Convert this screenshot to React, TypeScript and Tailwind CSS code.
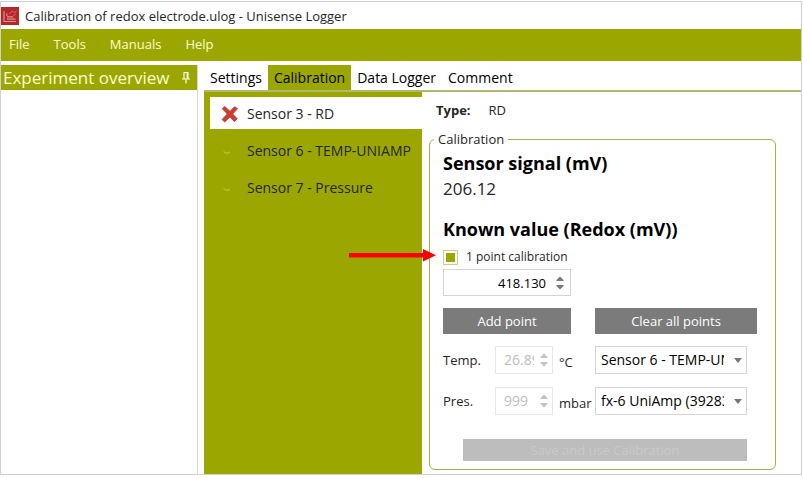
import { useState } from 'react';

const sensors = [
  { id: 3, name: 'Sensor 3 - RD', calibrated: false },
  { id: 6, name: 'Sensor 6 - TEMP-UNIAMP', calibrated: true },
  { id: 7, name: 'Sensor 7 - Pressure', calibrated: true },
];

const menus = ['File', 'Tools', 'Manuals', 'Help'];
const tabs = ['Settings', 'Calibration', 'Data Logger', 'Comment'];

function AppIcon() {
  return (
    <svg viewBox="0 0 18 18" className="size-[18px] shrink-0" aria-hidden="true">
      <rect width="18" height="18" fill="#b3282b" />
      <path d="M3 4v10.500h12M6 12.200h8.500M6 9.800h6M5.800 9V6.500" fill="none" stroke="#e58f88" strokeWidth="1.200" />
      <path d="M8.500 7l2.500-3 2.500 2 2-2.500M12 9l3-2" fill="none" stroke="#d9605f" strokeWidth="1" />
    </svg>
  );
}

function PinIcon() {
  return (
    <svg viewBox="0 0 10 14" className="h-3.5 w-2.5" fill="none" stroke="#fdfde0" aria-hidden="true">
      <path d="M2.500 1.500h5M3 1.500v6M7 1.500v6M1 8h8M5 8v4.500" strokeWidth="1.200" />
      <path d="M6.300 2v5.500" strokeWidth="1.400" />
    </svg>
  );
}

function CrossIcon() {
  return (
    <svg viewBox="0 0 18 18" className="size-[18px]" aria-hidden="true">
      <path
        d="M3.500 1.300L9 6.300l4.500-4.600 3.200 1.900L11.700 9l4.500 4.700-2.700 3.100L9 12l-5.200 5-2.800-2.400L6.300 9 1.300 3.800z"
        fill="#d23a2e"
        stroke="#a14a40"
        strokeWidth="0.800"
      />
    </svg>
  );
}

function TickIcon() {
  return (
    <svg viewBox="0 0 18 18" className="size-[18px]" aria-hidden="true">
      <path d="M2.500 9.500l3 2L9 10.300" fill="none" stroke="#b9c024" strokeWidth="1.500" />
    </svg>
  );
}

function Spinner({ label, disabled }: { label: string; disabled?: boolean }) {
  const color = disabled ? 'text-[#c4c4c4]' : 'text-[#777777]';
  return (
    <span className={`flex shrink-0 flex-col gap-1 px-1 ${color}`}>
      <button type="button" disabled={disabled} aria-label={`Increase ${label}`}>
        <svg viewBox="0 0 8 5" className="h-[5px] w-2" fill="currentColor"><path d="M0 4.500L4 .5l4 4-1.500.5h-5z" /></svg>
      </button>
      <button type="button" disabled={disabled} aria-label={`Decrease ${label}`}>
        <svg viewBox="0 0 8 5" className="h-[5px] w-2" fill="currentColor"><path d="M0 .5L4 4.500l4-4L6.500 0h-5z" /></svg>
      </button>
    </span>
  );
}

interface ConditionProps {
  id: string;
  label: string;
  value: string;
  unit: string;
  source: string;
}

function ConditionRow({ id, label, value, unit, source }: ConditionProps) {
  return (
    <div className="flex items-center">
      <label htmlFor={id} className="w-[52px]">{label}</label>
      <div className="flex h-7 w-[58px] items-center border border-[#e6e6e6] pl-2 text-sm text-[#bdbdbd]">
        <input id={id} disabled defaultValue={value} className="mr-0.5 w-full min-w-0 bg-transparent" />
        <Spinner label={label} disabled />
      </div>
      <span className="w-[42px] pl-1.5 pt-1">{unit}</span>
      <div className="relative flex h-7 w-[152px] items-center border border-[#d4d4d4] text-sm">
        <select aria-label={`${label} source`} className="h-full w-full appearance-none overflow-hidden pl-[5px] pr-[22px] text-black">
          <option>{source}</option>
        </select>
        <svg viewBox="0 0 8 5" className="pointer-events-none absolute right-1 h-[5px] w-2" fill="#777777"><path d="M0 0h8L4 5z" /></svg>
      </div>
    </div>
  );
}

export default function App() {
  const [tab, setTab] = useState('Calibration');
  const [sensor, setSensor] = useState(3);
  const [onePoint, setOnePoint] = useState(true);

  return (
    <div className="min-h-screen bg-white pb-[3px] pr-px pt-px font-['Open_Sans','Noto_Sans',sans-serif] text-[13px] leading-5 text-[#262626]">
      <div className="flex min-h-[474px] flex-col border border-[#d0d0d0]">
        <header className="flex h-[27px] items-center gap-1.5">
          <AppIcon />
          <h1>Calibration of redox electrode.ulog - Unisense Logger</h1>
        </header>

        <nav className="flex h-8 items-center gap-6 bg-[#9ba700] px-2 pb-0.5 text-[#fdfdd0]">
          {menus.map((m) => (
            <button key={m} type="button">{m}</button>
          ))}
        </nav>

        <div className="flex flex-1 gap-1.5 pt-1">
          <aside className="w-[197px] shrink-0 border-r border-[#d8d8d0]">
            <div className="flex h-[25px] items-center justify-between bg-[#9ba700] pl-0.5 pr-1.5 text-[#fdfdd0]">
              <h2 className="text-[17px]">Experiment overview</h2>
              <button type="button" aria-label="Pin"><PinIcon /></button>
            </div>
          </aside>

          <main className="flex min-w-0 flex-1 flex-col">
            <div role="tablist" className="flex h-[25px] text-sm text-black">
              {tabs.map((t) => (
                <button
                  key={t}
                  type="button"
                  role="tab"
                  aria-selected={t === tab}
                  onClick={() => setTab(t)}
                  className={t === tab ? 'bg-[#9ba700] px-1.5' : 'px-1.5'}
                >
                  {t}
                </button>
              ))}
            </div>

            <div className="flex flex-1 border-t-2 border-[#b0b872]">
              <div className="w-[218px] shrink-0 bg-[#9ba700] pl-1.5 pt-[5px]">
                {sensors.map((s) => (
                  <button
                    key={s.id}
                    type="button"
                    onClick={() => setSensor(s.id)}
                    className={`mb-[5px] flex h-8 w-full items-center gap-2 pl-[11px] pt-0.5 text-sm ${s.id === sensor ? 'bg-white' : ''}`}
                  >
                    {s.calibrated ? <TickIcon /> : <CrossIcon />}
                    {s.name}
                  </button>
                ))}
              </div>

              <div className="flex-1 pb-1 pl-[7px] pr-[25px] pt-2">
                <p className="flex gap-[18px] pl-[7px]">
                  <span className="font-bold">Type:</span>
                  <span>RD</span>
                </p>

                <fieldset className="mt-[9px] rounded-md border border-[#a5ae4a] px-[13px] pb-2">
                  <legend className="-ml-[9px] px-1">Calibration</legend>

                  <h3 className="text-lg leading-7 font-bold text-black">Sensor signal (mV)</h3>
                  <p className="text-[17px] leading-6">206.12</p>

                  <h3 className="mt-3.5 text-lg leading-7 font-bold text-black">Known value (Redox (mV))</h3>
                  <label className="mt-0.5 flex items-center gap-2 text-xs leading-6">
                    <input
                      type="checkbox"
                      checked={onePoint}
                      onChange={(e) => setOnePoint(e.target.checked)}
                      className="size-[15px] appearance-none border border-[#c9cf8a] bg-white p-0.5 checked:bg-[#9ba700] checked:bg-clip-content"
                    />
                    1 point calibration
                  </label>
                  <div className="flex h-[27px] w-32 items-center border border-[#d4d4d4] pr-0.5">
                    <input aria-label="Known value" defaultValue="418.130" className="w-full min-w-0 pr-1.5 text-right text-black" />
                    <Spinner label="known value" />
                  </div>

                  <div className="mt-3 flex gap-6 text-white">
                    <button type="button" className="h-[26px] w-32 bg-[#7b7b7b]">Add point</button>
                    <button type="button" className="h-[26px] w-[162px] bg-[#7b7b7b]">Clear all points</button>
                  </div>

                  <div className="mt-3 space-y-[13px]">
                    <ConditionRow id="temp" label="Temp." value="26.89" unit="°C" source="Sensor 6 - TEMP-UNIAMP" />
                    <ConditionRow id="pres" label="Pres." value="999" unit="mbar" source="fx-6 UniAmp (392834)" />
                  </div>

                  <button type="button" disabled className="ml-5 mt-6 h-[22px] w-[284px] bg-[#bdbdbd] text-[#c9c9c9]">
                    Save and use Calibration
                  </button>
                </fieldset>
              </div>
            </div>
          </main>
        </div>
      </div>

      {/* callout arrow pointing at the one point option */}
      <svg viewBox="0 0 87 14" className="absolute left-[349px] top-[248px] h-3.5 w-[87px]" fill="#fb0007" aria-hidden="true">
        <path d="M0 5h74V1l13 6.300-13 6.200V9.500H0z" />
      </svg>
    </div>
  );
}
